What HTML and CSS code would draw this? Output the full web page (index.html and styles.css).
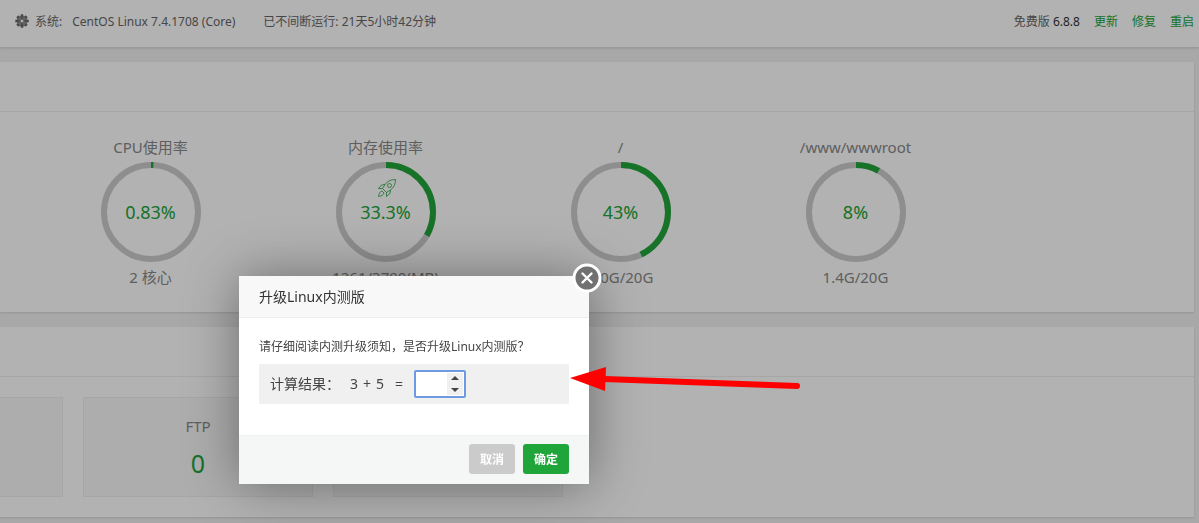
FILE: index.html
```html
<!DOCTYPE html>
<html lang="zh-CN">
<head>
  <meta charset="UTF-8">
  <meta name="viewport" content="width=device-width, initial-scale=1.0">
  <title>升级Linux内测版</title>
  <link rel="stylesheet" href="styles.css">
</head>
<body>
  <header class="topbar">
    <div class="sys">
      <svg class="gear" viewBox="0 0 14 14" width="14" height="14" aria-hidden="true">
        <circle cx="7" cy="7" r="4" fill="none" stroke="#888" stroke-width="3"/>
        <circle cx="7" cy="7" r="5.8" fill="none" stroke="#666" stroke-width="1.800" pathLength="80" stroke-dasharray="6 4" stroke-dashoffset="3"/>
        <circle cx="7" cy="7" r="2" fill="none" stroke="#666"/>
        <path d="M7 2v3M7 9v3M2 7h3M9 7h3" stroke="#555"/>
      </svg>
      <span class="sys-label">系统:</span>
      <span class="sys-name">CentOS Linux 7.4.1708 (Core)</span>
      <span>已不间断运行: 21天5小时42分钟</span>
    </div>
    <nav class="version">
      <span>免费版 <b>6.8.8</b></span>
      <a href="#">更新</a>
      <a href="#">修复</a>
      <a href="#">重启</a>
    </nav>
  </header>

  <main>
    <section class="panel">
      <div class="panel-title"></div>
      <div class="gauges">
        <div class="gauge">
          <h3>CPU使用率</h3>
          <div class="ring">
            <svg viewBox="0 0 100 100">
              <circle class="track" cx="50" cy="50" r="47"/>
              <circle class="bar" cx="50" cy="50" r="47" pathLength="100" stroke-dasharray="0.83 100"/>
            </svg>
            <span class="value">0.83%</span>
          </div>
          <p>2 核心</p>
        </div>
        <div class="gauge">
          <h3>内存使用率</h3>
          <div class="ring">
            <svg viewBox="0 0 100 100">
              <circle class="track" cx="50" cy="50" r="47"/>
              <circle class="bar" cx="50" cy="50" r="47" pathLength="100" stroke-dasharray="33.3 100"/>
            </svg>
            <svg class="rocket" viewBox="0 0 20 20" aria-hidden="true">
              <path d="M18.5 1.5C14 1.5 10.500 3 8 6.500L5.500 10.500L9.500 14.500L13.500 12C17 9.500 18.500 6 18.500 1.500Z"/>
              <path d="M8 6.500L4.500 7L1.500 10.500L5.500 10.500M13.500 12L13 15.500L9.500 18.500L9.500 14.500"/>
              <circle cx="12.500" cy="7.500" r="2"/>
              <path d="M5 13C3 13.500 2 15.500 1.500 18.500C4.500 18 6.500 17 7 15Z"/>
            </svg>
            <span class="value">33.3%</span>
          </div>
          <p>1261/3790(MB)</p>
        </div>
        <div class="gauge">
          <h3>/</h3>
          <div class="ring">
            <svg viewBox="0 0 100 100">
              <circle class="track" cx="50" cy="50" r="47"/>
              <circle class="bar" cx="50" cy="50" r="47" pathLength="100" stroke-dasharray="43 100"/>
            </svg>
            <span class="value">43%</span>
          </div>
          <p>8.0G/20G</p>
        </div>
        <div class="gauge">
          <h3>/www/wwwroot</h3>
          <div class="ring">
            <svg viewBox="0 0 100 100">
              <circle class="track" cx="50" cy="50" r="47"/>
              <circle class="bar" cx="50" cy="50" r="47" pathLength="100" stroke-dasharray="8 100"/>
            </svg>
            <span class="value">8%</span>
          </div>
          <p>1.4G/20G</p>
        </div>
      </div>
    </section>

    <section class="panel">
      <div class="panel-title"></div>
      <div class="cards">
        <div class="card"></div>
        <div class="card">
          <h3>FTP</h3>
          <a href="#">0</a>
        </div>
        <div class="card"></div>
      </div>
    </section>
  </main>

  <div class="mask"></div>

  <form class="dialog" role="dialog" aria-labelledby="dialog-title">
    <h2 id="dialog-title">升级Linux内测版</h2>
    <button type="button" class="close" aria-label="关闭">
      <svg viewBox="0 0 30 30" width="30" height="30">
        <circle cx="15" cy="15" r="13" fill="#717171" stroke="#fff" stroke-width="3"/>
        <path d="M10.500 10.500l9 9M19.500 10.500l-9 9" stroke="#fff" stroke-width="2.400" stroke-linecap="round"/>
      </svg>
    </button>
    <div class="dialog-body">
      <p>请仔细阅读内测升级须知，是否升级Linux内测版？</p>
      <div class="calc">
        <label for="result">计算结果：</label>
        <span class="sum"><span>3</span><span>+</span><span>5</span></span>
        <span class="equals">=</span>
        <input type="number" id="result">
      </div>
    </div>
    <div class="dialog-footer">
      <button type="button" class="btn btn-cancel">取消</button>
      <button type="submit" class="btn btn-ok">确定</button>
    </div>
  </form>

  <svg class="arrow" viewBox="0 0 232 26" width="232" height="26" aria-hidden="true">
    <path d="M0 11L36 0L35 24Z" fill="#f00"/>
    <path d="M34 12L227 19" stroke="#f00" stroke-width="6" stroke-linecap="round"/>
  </svg>
</body>
</html>
```
FILE: styles.css
```css
* {
  box-sizing: border-box;
}

body {
  margin: 0;
  min-height: 100vh;
  background: #f1f1f1;
  color: #666;
  font-family: "Noto Sans", "Noto Sans CJK SC", sans-serif;
  font-size: 12px;
  line-height: 20px;
  overflow: hidden;
}

h2, h3, p {
  margin: 0;
  font-weight: normal;
}

a {
  color: #20a53a;
  text-decoration: none;
}

/* top bar */
.topbar {
  display: flex;
  justify-content: space-between;
  height: 47px;
  padding: 12px 5px 0 15px;
  background: #fff;
  box-shadow: 0 1px 3px rgba(0, 0, 0, 0.15);
}

.sys {
  display: flex;
}

.gear {
  margin: 2px 6px 0 0;
}

.sys-label {
  margin-right: 10px;
}

.sys-name {
  margin-right: 28px;
}

.version {
  display: flex;
  gap: 14px;
}

.version b {
  color: #333;
  font-weight: normal;
}

/* panels */
main {
  padding: 15px 5px 0 0;
}

.panel {
  margin-bottom: 15px;
  background: #fff;
  box-shadow: 0 1px 2px rgba(0, 0, 0, 0.12);
}

.panel-title {
  height: 50px;
  border-bottom: 1px solid #eee;
}

.gauges {
  display: grid;
  grid-template-columns: repeat(4, 235px);
  padding: 23px 0 23px 33px;
}

.gauge {
  text-align: center;
  color: #888;
  font-size: 15px;
}

.gauge h3 {
  font-size: 15px;
  line-height: 24px;
}

.gauge p {
  margin-top: 3px;
  line-height: 24px;
}

.ring {
  position: relative;
  display: grid;
  place-items: center;
  width: 100px;
  height: 100px;
  margin: 3px auto 0;
}

.ring svg,
.ring .value {
  grid-area: 1 / 1;
}

.ring circle {
  fill: none;
  stroke-width: 6;
}

.track {
  stroke: #ccc;
}

.bar {
  stroke: #20a53a;
  transform: rotate(-90deg);
  transform-origin: center;
}

.value {
  color: #20a53a;
  font-size: 18px;
}

.ring .rocket {
  position: absolute;
  top: 16px;
  left: 41px;
  width: 20px;
  height: 20px;
  fill: none;
  stroke: #20a53a;
  stroke-width: 0.8;
}

.ring .rocket circle {
  stroke-width: 0.8;
}

/* first card runs off the left edge */
.cards {
  display: grid;
  grid-template-columns: repeat(3, 230px);
  gap: 20px;
  margin-left: -167px;
  padding: 20px 0;
}

.card {
  height: 100px;
  padding-top: 16px;
  border: 1px solid #eee;
  background: #f8f8f8;
  color: #888;
  text-align: center;
}

.card h3 {
  font-size: 15px;
  line-height: 24px;
}

.card a {
  display: block;
  margin-top: 5px;
  font-size: 25px;
  line-height: 40px;
}

.mask {
  position: fixed;
  inset: 0;
  background: rgba(0, 0, 0, 0.3);
}

/* dialog */
.dialog {
  position: absolute;
  top: 276px;
  left: 239px;
  width: 350px;
  background: #fff;
  color: #444;
  box-shadow: 1px 1px 50px rgba(0, 0, 0, 0.4);
}

.dialog h2 {
  padding: 0 20px;
  border-bottom: 1px solid #eee;
  background: #f8f8f8;
  color: #333;
  font-size: 14px;
  line-height: 41px;
}

.close {
  position: absolute;
  top: -13px;
  right: -13px;
  width: 30px;
  height: 30px;
  padding: 0;
  border: 0;
  background: none;
  cursor: pointer;
}

.dialog-body {
  padding: 19px 20px 31px;
}

.calc {
  display: flex;
  align-items: center;
  height: 40px;
  margin-top: 7px;
  padding: 0 11px;
  background: #f0f0f0;
  font-size: 14px;
}

.sum {
  display: flex;
  gap: 5px;
  margin: 0 11px 0 10px;
}

.calc input {
  width: 52px;
  height: 28px;
  margin-left: 11px;
  padding: 0 1px 0 5px;
  border: 2px solid #6d9ae0;
  border-radius: 2px;
  background: #fff;
  font-size: 14px;
  outline: none;
}

.calc input::-webkit-inner-spin-button {
  appearance: none;
  width: 16px;
  height: 22px;
  opacity: 1;
  background: #f0f0f0 url("data:image/svg+xml,%3Csvg xmlns='http://www.w3.org/2000/svg' width='16' height='22'%3E%3Cpath d='M4 7l4-4 4 4zM4 15h8l-4 4z' fill='%23444'/%3E%3C/svg%3E") center no-repeat;
}

.dialog-footer {
  display: flex;
  justify-content: flex-end;
  gap: 8px;
  padding: 8px 20px 10px;
  border-top: 1px solid #edf1f2;
  background: #f5f7f7;
}

.btn {
  width: 46px;
  height: 30px;
  padding: 0;
  border: 0;
  border-radius: 3px;
  color: #fff;
  font-family: inherit;
  font-size: 12px;
  font-weight: bold;
  cursor: pointer;
}

.btn-cancel {
  background: #cbcbcb;
}

.btn-ok {
  background: #20a53a;
}

.arrow {
  position: absolute;
  top: 367px;
  left: 570px;
  pointer-events: none;
}
```
